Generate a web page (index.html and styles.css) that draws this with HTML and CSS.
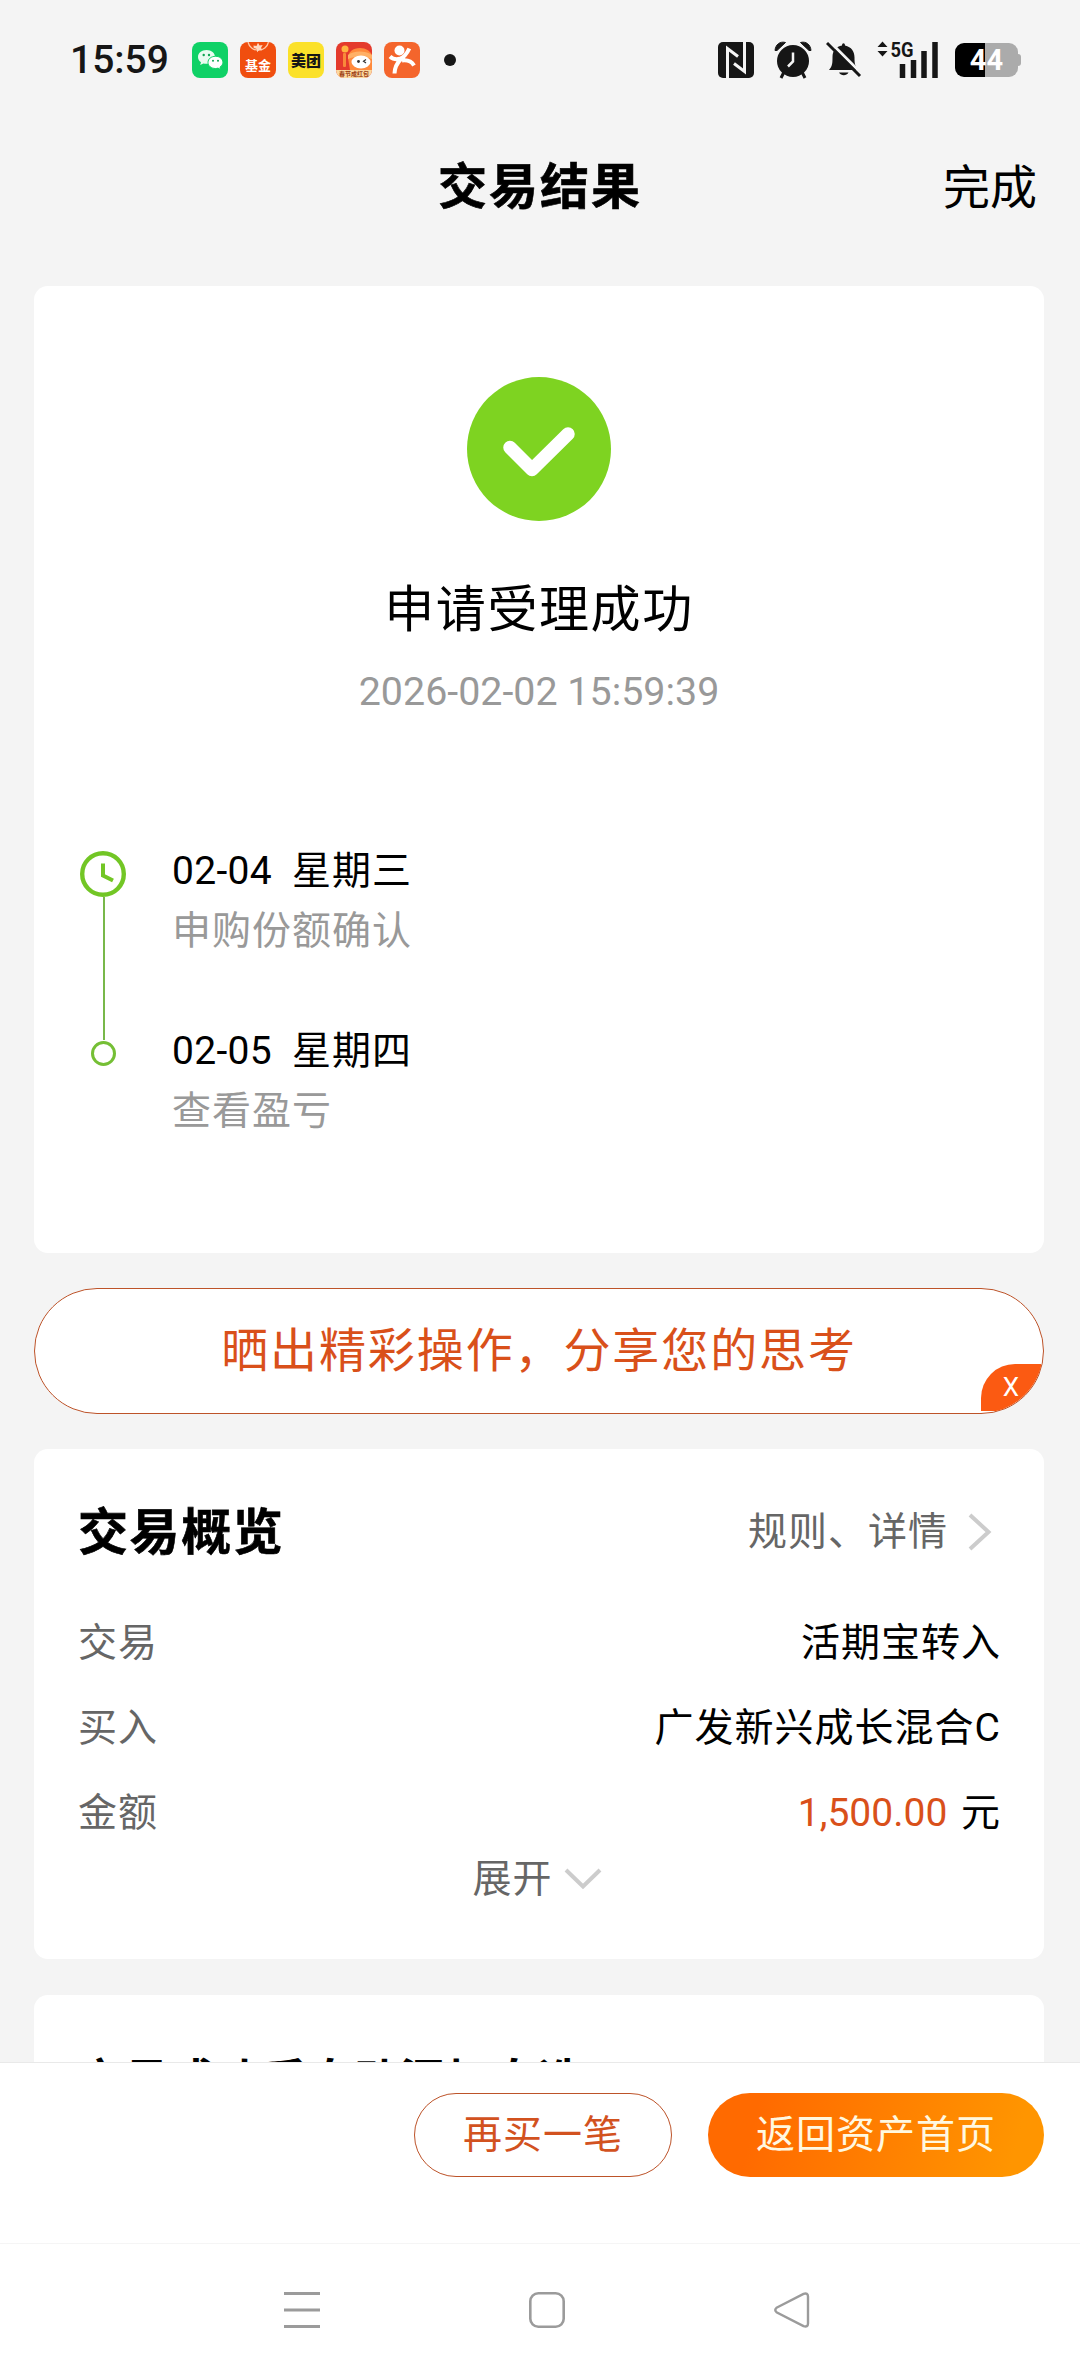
FILE: index.html
```html
<!DOCTYPE html>
<html lang="zh-CN">
<head>
    <meta charset="UTF-8">
    <meta name="viewport" content="width=device-width, initial-scale=1.0">
    <title>交易结果</title>
    <link rel="stylesheet" href="styles.css">
</head>
<body>
    <div class="status">
        <span class="time">15:59</span>
        <div class="apps">
            <svg width="36" height="36" viewBox="0 0 36 36">
                <rect width="36" height="36" rx="8" fill="#0fd166"/>
                <path d="M14.500 8C9.500 8 6 11 6 15c0 2.200 1.100 4 3 5.300L8.200 23l3.200-1.600c1 .3 2 .4 3.100.4 5 0 8.500-2.800 8.500-6.800S19.500 8 14.500 8z" fill="#e9fbf0"/>
                <path d="M23.500 14.300c-4.300 0-7.500 2.600-7.500 6.100s3.200 6.100 7.500 6.100c.9 0 1.800-.1 2.500-.4l2.700 1.500-.7-2.500c1.800-1.100 2.900-2.800 2.900-4.700 0-3.500-3.100-6.100-7.400-6.100z" fill="#fff" stroke="#0fd166"/>
                <circle cx="11.700" cy="13" r="1.200" fill="#0fa653"/><circle cx="17" cy="13" r="1.200" fill="#0fa653"/>
                <circle cx="21" cy="18.700" r="1" fill="#0fa653"/><circle cx="26" cy="18.700" r="1" fill="#0fa653"/>
            </svg>
            <div class="app fund">
                <svg width="36" height="16" viewBox="0 0 36 16">
                    <path d="M8 0a10.500 10.500 0 0 0 20.500 0" fill="none" stroke="#ffc9a8" stroke-width="1.300"/>
                    <path d="M13.500 3.500l3 .6L18 .8l1.500 2.800 3.200-.6-1.600 2.700 1 2.600-3-.4-2 2.400-.4-3.200-3-1.100z" fill="#ffd9c2"/>
                </svg>
                <span>基金</span>
            </div>
            <div class="app meituan">美团</div>
            <div class="app taobao">
                <svg width="36" height="28" viewBox="0 0 36 28">
                    <path d="M12 16c0-6 5-10 12-10 6 0 10 3 12 7v15H14z" fill="#ff8a3c"/>
                    <path d="M12 13c5-4 16-5 24 0v4c-8-3-17-3-24 0z" fill="#ffb066"/>
                    <circle cx="9" cy="7" r="3.500" fill="#ffb340"/>
                    <rect x="7" y="11" width="3" height="14" rx="1" fill="#f98a3a"/>
                    <ellipse cx="25" cy="20" rx="9.500" ry="6.500" fill="#fff"/>
                    <circle cx="22.500" cy="19.500" r="1.400" fill="#333"/>
                    <path d="M30 17.500l-2.500 1.800 2.500 1.700" fill="none" stroke="#333" stroke-width="1.200"/>
                </svg>
                <span>春节成红包</span>
            </div>
            <svg width="36" height="36" viewBox="0 0 36 36">
                <rect width="36" height="36" rx="8" fill="#f4652c"/>
                <circle cx="15.500" cy="8.500" r="5" fill="#fff"/>
                <path d="M6 14.500c3 2.800 6 3.300 9.800 2.300C20 15.500 23 11.500 25.300 6.500M17 17c-4 4-6.300 8.500-6.500 14.500M18 18.500c6-.8 9.800 1.200 12 5" fill="none" stroke="#fff" stroke-width="4"/>
            </svg>
        </div>
        <i class="dot"></i>
        <div class="signals">
            <svg width="36" height="36" viewBox="0 0 36 36">
                <rect width="36" height="36" rx="5" fill="#161616"/>
                <path d="M9.500 36V6.500L20 14.500M26.500 0v29.500L16 21.500" fill="none" stroke="#f4f4f4" stroke-width="3"/>
            </svg>
            <svg class="alarm" width="38" height="38" viewBox="0 0 38 38">
                <circle cx="19" cy="20" r="16" fill="#161616"/>
                <path d="M1 9.500C1.500 3.500 6 0 11.500 1.500L3 9.500zM37 9.500C36.500 3.500 32 0 26.500 1.500L35 9.500z" fill="#161616" stroke="#161616"/>
                <path d="M10 31l-3 6M28 31l3 6" stroke="#161616" stroke-width="3"/>
                <path d="M19 11.500v9l-5 5" fill="none" stroke="#f4f4f4" stroke-width="2.500"/>
            </svg>
            <svg class="bell" width="36" height="38" viewBox="0 0 36 38">
                <path d="M3 29c3.500-4 3.500-7 3.500-13 0-6.500 4-10.500 9.500-11.500 0-3 3-3 3 0 6.500 1.500 9.500 6 9.500 12 0 6 .5 9 4 12.500z" fill="#161616"/>
                <path d="M13 31.500h9.500c-2 3.500-7.500 3.500-9.500 0z" fill="#161616"/>
                <path d="M3.500.5l32 32" stroke="#f4f4f4" stroke-width="3"/>
                <path d="M1 2l33 33" stroke="#161616" stroke-width="3"/>
            </svg>
            <svg class="net" width="62" height="46" viewBox="0 -8 62 46">
                <path d="M5.500.5l5 5.500h-10zM5.500 15.500l5-5.500h-10z" fill="#161616"/>
                <text x="13.500" y="15.500" class="g5" textLength="23" lengthAdjust="spacingAndGlyphs">5G</text>
                <path d="M25.500 23v14M36.500 19v18M47 10v27M58 1v36" stroke="#161616" stroke-width="5.500"/>
            </svg>
            <div class="battery"><span>44</span></div>
        </div>
    </div>
    <div class="header">
        <h1>交易结果</h1>
        <a class="done">完成</a>
    </div>
    <div class="main">
        <div class="card result">
            <svg width="144" height="144" viewBox="0 0 144 144">
                <circle cx="72" cy="72" r="72" fill="#7ed321"/>
                <path d="M43 70.500L65 92.500L101 57" fill="none" stroke="#fff" stroke-width="13.500" stroke-linecap="round" stroke-linejoin="round"/>
            </svg>
            <h2>申请受理成功</h2>
            <p class="date">2026-02-02 15:59:39</p>
            <div class="steps">
                <svg width="48" height="230" viewBox="0 0 48 230">
                    <path d="M24 51v143" stroke="#78b84a" stroke-width="2"/>
                    <circle cx="23" cy="28" r="20.800" fill="#fff" stroke="#72c625" stroke-width="4.400"/>
                    <path d="M23 17.500v12l10 5" fill="none" stroke="#72c625" stroke-width="4"/>
                    <circle cx="23.500" cy="207.500" r="11" fill="#fff" stroke="#75bf35" stroke-width="3"/>
                </svg>
                <ul>
                    <li><b><i>02-04  </i>星期三</b><span>申购份额确认</span></li>
                    <li><b><i>02-05  </i>星期四</b><span>查看盈亏</span></li>
                </ul>
            </div>
        </div>
        <div class="share">
            晒出精彩操作，分享您的思考
            <span class="close">X</span>
        </div>
        <div class="card detail">
            <div class="title">
                <h3>交易概览</h3>
                <a>规则、详情
                    <svg width="24" height="38" viewBox="0 0 24 38"><path d="M2 2l18.500 17L2 36" fill="none" stroke="#ccc" stroke-width="4"/></svg>
                </a>
            </div>
            <ul class="rows">
                <li><span>交易</span><b>活期宝转入</b></li>
                <li><span>买入</span><b>广发新兴成长混合C</b></li>
                <li><span>金额</span><b><em>1,500.00</em> 元</b></li>
            </ul>
            <div class="more">展开
                <svg width="38" height="24" viewBox="0 0 38 24"><path d="M2 3l17 16.500L36 3" fill="none" stroke="#ccc" stroke-width="4"/></svg>
            </div>
        </div>
        <div class="card auto">
            <h3>交易成功后自动添加自选</h3>
        </div>
    </div>
    <div class="footer">
        <a class="btn">再买一笔</a>
        <a class="btn primary">返回资产首页</a>
    </div>
    <div class="nav">
        <svg width="36" height="36" viewBox="0 0 36 36"><path d="M0 1.500h36M0 18h36M0 34.500h36" stroke="#9b9b9b" stroke-width="3"/></svg>
        <svg width="36" height="36" viewBox="0 0 36 36"><rect x="1.300" y="1.300" width="33.400" height="33.400" rx="8" fill="none" stroke="#9b9b9b" stroke-width="2.600"/></svg>
        <svg width="36" height="36" viewBox="0 0 36 36"><path d="M2.500 15.800L29.500 1.900Q34 .5 34 4.500V31.500Q34 35.500 29.500 34.100L2.500 20.200Q0 18 2.500 15.800z" fill="none" stroke="#9b9b9b" stroke-width="2.400"/></svg>
    </div>
</body>
</html>
```

FILE: styles.css
```css
*{
    margin: 0;
    padding: 0;
    box-sizing: border-box;
    list-style: none;
}
body{
    width: 1080px;
    height: 2376px;
    overflow: hidden;
    display: flex;
    flex-direction: column;
    background-color: #f4f4f4;
    color: #000;
    font-family: Roboto, "Noto Sans CJK SC", sans-serif;
    font-size: 39px;
    letter-spacing: 1px;
    line-height: 50px;
}
b, em, i{
    font-weight: normal;
    font-style: normal;
}
svg{
    display: block;
    flex: none;
}
/* 状态栏 */
.status{
    flex: none;
    height: 120px;
    padding: 0 59px 0 70px;
    display: flex;
    align-items: center;
    color: #161616;
    letter-spacing: 0;
}
.time{
    width: 122px;
    font-size: 39px;
    font-weight: 500;
}
.apps{
    display: flex;
    gap: 12px;
}
.app{
    width: 36px;
    height: 36px;
    border-radius: 8px;
    overflow: hidden;
    text-align: center;
}
.fund{
    background-color: #f04e0f;
    color: #fff;
    font-size: 13px;
    font-weight: bold;
    line-height: 15px;
}
.fund span{
    display: block;
}
.meituan{
    background-color: #fbe12a;
    color: #161616;
    font-size: 15px;
    font-weight: 900;
    line-height: 38px;
}
.taobao{
    background-color: #e43a2c;
}
.taobao span{
    display: block;
    height: 8px;
    background-color: #fbd9a0;
    color: #9c3d13;
    font-size: 6px;
    font-weight: bold;
    line-height: 8px;
}
.dot{
    width: 12px;
    height: 12px;
    margin-left: 24px;
    border-radius: 50%;
    background-color: #161616;
}
.signals{
    margin-left: auto;
    display: flex;
    align-items: center;
}
.alarm{
    margin-left: 20px;
}
.bell{
    margin-left: 14px;
}
.net{
    margin: -8px 0 0 15px;
}
.g5{
    font-size: 21px;
    font-weight: bold;
    fill: #161616;
}
.battery{
    position: relative;
    width: 63px;
    height: 34px;
    margin-left: 16px;
    margin-right: 3px;
    border-radius: 9px;
    background: linear-gradient(to right, #000 30px, #ababab 30px);
    color: #fff;
    font-size: 29px;
    font-weight: bold;
    line-height: 35px;
    text-align: center;
}
.battery::after{
    content: "";
    position: absolute;
    right: -3px;
    top: 11px;
    width: 3px;
    height: 12px;
    border-radius: 0 3px 3px 0;
    background-color: #ababab;
}
/* 标题 */
.header{
    flex: none;
    height: 132px;
    padding: 4px 43px 0;
    display: grid;
    grid-template-columns: 1fr auto 1fr;
    align-items: center;
}
.header h1{
    grid-column: 2;
    font-size: 49px;
    letter-spacing: 2px;
    -webkit-text-stroke: .6px #000;
}
.done{
    justify-self: end;
    font-size: 47px;
    letter-spacing: 0;
}
/* 内容 */
.main{
    flex: none;
    height: 1810px;
    padding: 34px 36px 0 34px;
    overflow: hidden;
}
.card{
    border-radius: 14px;
    background-color: #fff;
}
.result{
    height: 967px;
    padding-top: 91px;
    display: flex;
    flex-direction: column;
    align-items: center;
}
.result h2{
    margin-top: 59px;
    font-size: 50px;
    font-weight: normal;
    letter-spacing: 1.6px;
    line-height: 60px;
}
.date{
    margin-top: 27px;
    color: #999;
    font-size: 39.4px;
    letter-spacing: 0;
}
.steps{
    align-self: stretch;
    margin-top: 129px;
    padding-left: 46px;
    display: flex;
    gap: 44px;
}
.steps li{
    height: 180px;
}
.steps b{
    display: block;
    white-space: pre;
}
.steps i{
    letter-spacing: .3px;
}
.steps span{
    display: block;
    margin-top: 10px;
    color: #999;
}
.share{
    position: relative;
    height: 126px;
    margin: 35px 0;
    border: 1px solid #bd5329;
    border-radius: 63px;
    overflow: hidden;
    background-color: #fff;
    color: #d9501a;
    font-size: 47px;
    letter-spacing: 1.9px;
    line-height: 124px;
    text-align: center;
}
.close{
    position: absolute;
    right: 2px;
    bottom: 2px;
    width: 60px;
    height: 47px;
    border-radius: 34px 0 0 0;
    background-color: #fb5a12;
    color: #fff;
    font-size: 26px;
    letter-spacing: 0;
    line-height: 47px;
}
.detail{
    height: 510px;
    padding: 54px 43px 0 44px;
}
.title{
    display: flex;
    justify-content: space-between;
    align-items: center;
}
.title h3{
    font-size: 50px;
    letter-spacing: 1.6px;
    line-height: 60px;
    -webkit-text-stroke: .6px #000;
}
.title a{
    padding: 0 9px 2px 0;
    display: flex;
    align-items: center;
    gap: 20px;
    color: #666;
}
.rows{
    margin-top: 38px;
}
.rows li{
    display: flex;
    justify-content: space-between;
    line-height: 85px;
}
.rows span{
    color: #666;
}
.rows em{
    margin-right: 3px;
    color: #d9501a;
    letter-spacing: 0;
}
.more{
    margin-top: -2px;
    padding-right: 5px;
    display: flex;
    justify-content: center;
    align-items: center;
    gap: 11px;
    color: #666;
}
.auto{
    height: 300px;
    margin-top: 36px;
    padding: 57px 44px 0;
}
.auto h3{
    font-size: 45px;
    line-height: 60px;
}
/* 底部按钮 */
.footer{
    flex: none;
    height: 181px;
    padding: 30px 36px 0;
    border-top: 1px solid #e9e9e9;
    display: flex;
    justify-content: flex-end;
    gap: 36px;
    background-color: #fff;
}
.btn{
    width: 258px;
    height: 84px;
    border: 1px solid #bd5329;
    border-radius: 42px;
    color: #d2521f;
    line-height: 82px;
    text-align: center;
}
.btn.primary{
    width: 336px;
    border: none;
    background: linear-gradient(105deg, #ff6a00 15%, #ff9500 90%);
    color: #fff8e0;
    line-height: 84px;
}
.nav{
    flex: 1;
    padding: 48px 270px 0 284px;
    border-top: 1px solid #f5f5f5;
    display: flex;
    justify-content: space-between;
    background-color: #fff;
}
```
